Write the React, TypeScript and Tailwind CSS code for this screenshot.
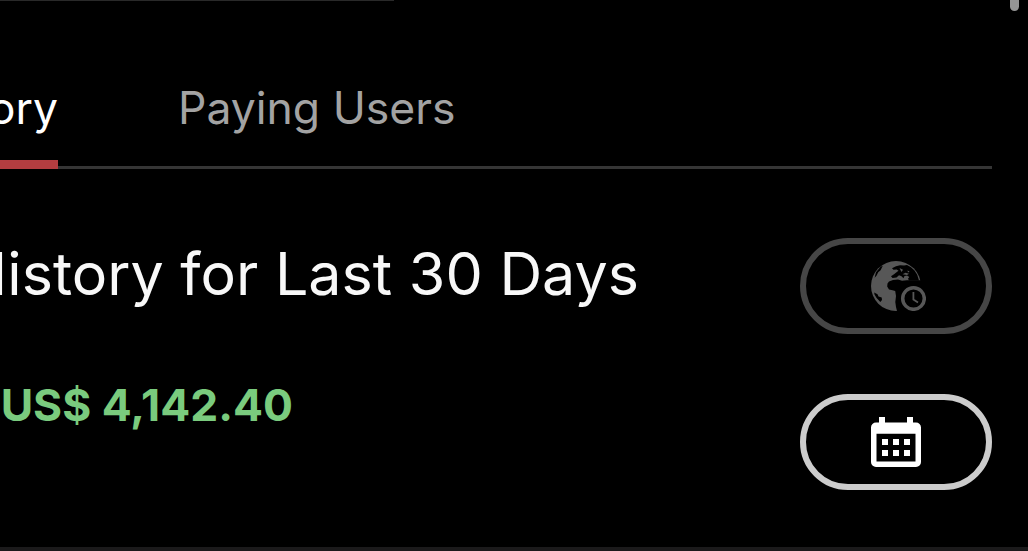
import type { ReactNode } from 'react'

function GlobeClockIcon() {
  return (
    <svg width="55" height="50" viewBox="0 0 55 50" fill="none" aria-hidden="true">
      <circle cx="25" cy="25" r="25" fill="#575757" />
      {/* Africa and everything east of it */}
      <path
        d="M18 20.5L22 19L27 18.6L31 19.8L36 19.2H52V52H26.5L25 46L24.3 41L25 35L24.2 30L21.5 29.3L18 28.5L16.2 25.5L16.5 22.5Z"
        fill="#000"
      />
      {/* Europe */}
      <path
        d="M25 5.2L29 4.2L33 4.5L36 4L40 6.2L43.5 9.6L46.2 13.7L48 19.5H38L37 17.8L38.3 16L36 14.5L33.5 15L32.5 17.2L30.5 15.2L28 14.2L25.5 16.5L21.5 17L20 15.3L23 13.3L25.5 11.3L27.5 9.7L25.7 8.4L22.5 8.8L21 7.3Z"
        fill="#000"
      />
      <path
        d="M28.5 7L32 8.8L30.5 11ZM31.5 13.2L34.5 11.8L38 12.8L36 14ZM36.5 9.6L38.6 10.4L37 11.6Z"
        fill="#575757"
      />
      {/* Americas */}
      <path d="M9.5 5.8L11.8 4.8L9.6 9.2L7.2 11.2L5.6 14.5L3.6 16.8L5 11.2Z" fill="#000" />
      <path d="M3.2 31.5L6.5 33.2L7.5 35.5L10.7 36.5L11 39L9.3 41L5.6 37L3.5 33.6Z" fill="#000" />
      <circle cx="42.5" cy="37.5" r="10.8" stroke="#575757" strokeWidth="3.5" />
      <path d="M42.4 31V38.4L47 41.4" stroke="#575757" strokeWidth="1.8" />
    </svg>
  )
}

function CalendarIcon() {
  return (
    <svg width="50" height="50" viewBox="0 0 50 50" fill="#fff" aria-hidden="true">
      <path
        fillRule="evenodd"
        d="M8 0H14V5.5H36V0H42V5.5H45A5 5 0 0 1 50 10.5V45A5 5 0 0 1 45 50H5A5 5 0 0 1 0 45V10.5A5 5 0 0 1 5 5.5H8ZM5.5 16.7V44.5H44.5V16.7Z"
      />
      <path d="M11 22H17V28H11ZM22 22H28V28H22ZM33 22H39V28H33ZM11 33H17V39H11ZM22 33H28V39H22ZM33 33H39V39H33Z" />
    </svg>
  )
}

function PillButton({ label, className, children }: { label: string; className: string; children: ReactNode }) {
  return (
    <button
      type="button"
      aria-label={label}
      className={`flex h-24 w-48 items-center rounded-full border-[6px] pl-[65px] ${className}`}
    >
      {children}
    </button>
  )
}

export default function App() {
  return (
    <div className="flex h-[551px] w-[1028px] flex-col overflow-hidden bg-black font-['Inter',sans-serif] text-white">
      <header className="flex h-[75px] shrink-0 items-start justify-between">
        <div className="h-px w-[394px] bg-[#292929]" />
        <div className="mr-[9px] h-[11px] w-[9px] rounded-b-full bg-[#949494]" />
      </header>

      <nav className="mr-9 flex h-[94px] shrink-0 items-end">
        <button
          type="button"
          className="flex h-full w-[58px] shrink-0 justify-end border-b-[9px] border-[#b33d40] text-[44.5px] leading-[67px] whitespace-nowrap"
        >
          History
        </button>
        <button
          type="button"
          className="flex h-full grow border-b-[3px] border-[#353535] pl-[120px] text-[44.5px] leading-[67px] whitespace-nowrap text-[#a3a3a3]"
        >
          Paying Users
        </button>
      </nav>

      <main className="mr-9 flex grow justify-between">
        <section className="flex w-[639px] flex-col pt-[69px]">
          <h1 className="flex justify-end text-[59.2px] leading-[72px] whitespace-nowrap text-[#f8f8f8]">
            History for Last 30 Days
          </h1>
          <p className="mt-[68px] flex w-[293px] justify-end text-[44.4px] leading-[54px] font-bold whitespace-nowrap text-[#7acb7e]">
            US$ 4,142.40
          </p>
        </section>
        <div className="flex flex-col gap-[60px] pt-[69px]">
          <PillButton label="Time zone" className="border-[#464646]">
            <GlobeClockIcon />
          </PillButton>
          <PillButton label="Date range" className="border-[#cccccc]">
            <CalendarIcon />
          </PillButton>
        </div>
      </main>
      <footer className="h-1 shrink-0 bg-[#1b1a1b]" />
    </div>
  )
}
